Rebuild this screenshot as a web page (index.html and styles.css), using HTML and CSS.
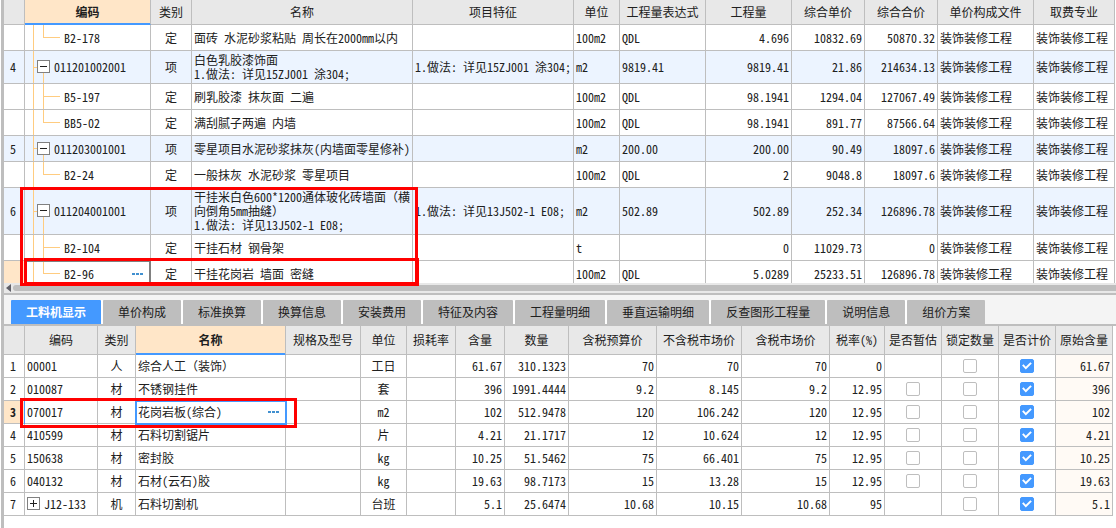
FILE: index.html
```html
<!DOCTYPE html>
<html lang="zh-CN">
<head>
<meta charset="utf-8">
<title>分部分项</title>
<link rel="stylesheet" href="styles.css">
</head>
<body>
<main class="app">
<section class="upper">
<div class="viewport">
<table class="grid bills">
<colgroup><col class="w21"><col class="w126"><col class="w41"><col><col class="w161"><col class="w46"><col class="w86"><col class="w86"><col class="w73"><col class="w73"><col class="w96"><col class="w81"></colgroup>
<thead>
<tr><th></th><th class="current">编码</th><th>类别</th><th>名称</th><th>项目特征</th><th>单位</th><th>工程量表达式</th><th>工程量</th><th>综合单价</th><th>综合合价</th><th>单价构成文件</th><th>取费专业</th></tr>
</thead>
<tbody>
<tr><td class="no"></td><td class="leaf last">B2-178</td><td class="mid">定</td><td>面砖 水泥砂浆粘贴 周长在2000mm以内</td><td></td><td>100m2</td><td>QDL</td><td class="num">4.696</td><td class="num">10832.69</td><td class="num">50870.32</td><td>装饰装修工程</td><td>装饰装修工程</td></tr>
<tr class="item two"><td class="no">4</td><td class="branch"><button class="fold" aria-label="折叠"><svg viewBox="0 0 13 13"><path d="M3 6.5h7"/></svg></button>011201002001</td><td class="mid">项</td><td>白色乳胶漆饰面<br>1.做法: 详见15ZJ001 涂304;</td><td>1.做法: 详见15ZJ001 涂304;</td><td>m2</td><td>9819.41</td><td class="num">9819.41</td><td class="num">21.86</td><td class="num">214634.13</td><td>装饰装修工程</td><td>装饰装修工程</td></tr>
<tr><td class="no"></td><td class="leaf">B5-197</td><td class="mid">定</td><td>刷乳胶漆 抹灰面 二遍</td><td></td><td>100m2</td><td>QDL</td><td class="num">98.1941</td><td class="num">1294.04</td><td class="num">127067.49</td><td>装饰装修工程</td><td>装饰装修工程</td></tr>
<tr><td class="no"></td><td class="leaf last">BB5-02</td><td class="mid">定</td><td>满刮腻子两遍 内墙</td><td></td><td>100m2</td><td>QDL</td><td class="num">98.1941</td><td class="num">891.77</td><td class="num">87566.64</td><td>装饰装修工程</td><td>装饰装修工程</td></tr>
<tr class="item"><td class="no">5</td><td class="branch"><button class="fold" aria-label="折叠"><svg viewBox="0 0 13 13"><path d="M3 6.5h7"/></svg></button>011203001001</td><td class="mid">项</td><td>零星项目水泥砂浆抹灰(内墙面零星修补)</td><td></td><td>m2</td><td>200.00</td><td class="num">200.00</td><td class="num">90.49</td><td class="num">18097.6</td><td>装饰装修工程</td><td>装饰装修工程</td></tr>
<tr><td class="no"></td><td class="leaf last">B2-24</td><td class="mid">定</td><td>一般抹灰 水泥砂浆 零星项目</td><td></td><td>100m2</td><td>QDL</td><td class="num">2</td><td class="num">9048.8</td><td class="num">18097.6</td><td>装饰装修工程</td><td>装饰装修工程</td></tr>
<tr class="item three"><td class="no">6</td><td class="branch"><button class="fold" aria-label="折叠"><svg viewBox="0 0 13 13"><path d="M3 6.5h7"/></svg></button>011204001001</td><td class="mid">项</td><td>干挂米白色600*1200通体玻化砖墙面（横<br>向倒角5mm抽缝）<br>1.做法: 详见13J502-1 E08;</td><td>1.做法: 详见13J502-1 E08;</td><td>m2</td><td>502.89</td><td class="num">502.89</td><td class="num">252.34</td><td class="num">126896.78</td><td>装饰装修工程</td><td>装饰装修工程</td></tr>
<tr><td class="no"></td><td class="leaf">B2-104</td><td class="mid">定</td><td>干挂石材 钢骨架</td><td></td><td>t</td><td></td><td class="num">0</td><td class="num">11029.73</td><td class="num">0</td><td>装饰装修工程</td><td>装饰装修工程</td></tr>
<tr><td class="no current"></td><td class="leaf last focus"><div class="pick">B2-96<button class="more" aria-label="选择编码"><svg viewBox="0 0 11 2"><path d="M0 0h3v2H0zM4 0h3v2H4zM8 0h3v2H8z"/></svg></button></div></td><td class="mid">定</td><td>干挂花岗岩 墙面 密缝</td><td></td><td>100m2</td><td>QDL</td><td class="num">5.0289</td><td class="num">25233.51</td><td class="num">126896.78</td><td>装饰装修工程</td><td>装饰装修工程</td></tr>
</tbody>
</table>
</div>
<div class="scrollbar"><svg class="arrow" viewBox="0 0 5 8"><path d="M5 0v8L0 4z"/></svg><div class="thumb"></div></div>
<div class="mark mark-item"></div>
<div class="mark mark-row"></div>
</section>
<section class="lower">
<nav class="tabs" role="tablist">
<button class="tab active" role="tab" aria-selected="true">工料机显示</button><button class="tab" role="tab">单价构成</button><button class="tab" role="tab">标准换算</button><button class="tab" role="tab">换算信息</button><button class="tab" role="tab">安装费用</button><button class="tab" role="tab">特征及内容</button><button class="tab" role="tab">工程量明细</button><button class="tab" role="tab">垂直运输明细</button><button class="tab" role="tab">反查图形工程量</button><button class="tab" role="tab">说明信息</button><button class="tab" role="tab">组价方案</button>
</nav>
<div class="resources-wrap">
<table class="grid resources">
<colgroup><col class="w21"><col class="w73"><col class="w38"><col><col class="w75"><col class="w46"><col class="w49"><col class="w49"><col class="w64"><col class="w88"><col class="w85"><col class="w88"><col class="w55"><col class="w57"><col class="w57"><col class="w57"><col class="w57"></colgroup>
<thead>
<tr><th></th><th>编码</th><th>类别</th><th class="current">名称</th><th>规格及型号</th><th>单位</th><th>损耗率</th><th>含量</th><th>数量</th><th>含税预算价</th><th>不含税市场价</th><th>含税市场价</th><th>税率(%)</th><th>是否暂估</th><th>锁定数量</th><th>是否计价</th><th>原始含量</th></tr>
</thead>
<tbody>
<tr><td class="no">1</td><td>00001</td><td class="mid">人</td><td>综合人工（装饰）</td><td></td><td class="mid">工日</td><td></td><td class="num">61.67</td><td class="num">310.1323</td><td class="num">70</td><td class="num">70</td><td class="num">70</td><td class="num">0</td><td></td><td class="mid"><input type="checkbox" aria-label="锁定数量"></td><td class="mid"><input type="checkbox" aria-label="是否计价" checked></td><td class="num origin">61.67</td></tr>
<tr><td class="no">2</td><td>010087</td><td class="mid">材</td><td>不锈钢挂件</td><td></td><td class="mid">套</td><td></td><td class="num">396</td><td class="num">1991.4444</td><td class="num">9.2</td><td class="num">8.145</td><td class="num">9.2</td><td class="num">12.95</td><td class="mid"><input type="checkbox" aria-label="是否暂估"></td><td class="mid"><input type="checkbox" aria-label="锁定数量"></td><td class="mid"><input type="checkbox" aria-label="是否计价" checked></td><td class="num origin">396</td></tr>
<tr><td class="no current">3</td><td class="start">070017</td><td class="mid">材</td><td class="editing"><div class="pick">花岗岩板(综合)<button class="more" aria-label="选择材料"><svg viewBox="0 0 11 2"><path d="M0 0h3v2H0zM4 0h3v2H4zM8 0h3v2H8z"/></svg></button></div></td><td></td><td class="mid">m2</td><td></td><td class="num">102</td><td class="num">512.9478</td><td class="num">120</td><td class="num">106.242</td><td class="num">120</td><td class="num">12.95</td><td class="mid"><input type="checkbox" aria-label="是否暂估"></td><td class="mid"><input type="checkbox" aria-label="锁定数量"></td><td class="mid"><input type="checkbox" aria-label="是否计价" checked></td><td class="num origin">102</td></tr>
<tr><td class="no">4</td><td>410599</td><td class="mid">材</td><td>石料切割锯片</td><td></td><td class="mid">片</td><td></td><td class="num">4.21</td><td class="num">21.1717</td><td class="num">12</td><td class="num">10.624</td><td class="num">12</td><td class="num">12.95</td><td class="mid"><input type="checkbox" aria-label="是否暂估"></td><td class="mid"><input type="checkbox" aria-label="锁定数量"></td><td class="mid"><input type="checkbox" aria-label="是否计价" checked></td><td class="num origin">4.21</td></tr>
<tr><td class="no">5</td><td>150638</td><td class="mid">材</td><td>密封胶</td><td></td><td class="mid">kg</td><td></td><td class="num">10.25</td><td class="num">51.5462</td><td class="num">75</td><td class="num">66.401</td><td class="num">75</td><td class="num">12.95</td><td class="mid"><input type="checkbox" aria-label="是否暂估"></td><td class="mid"><input type="checkbox" aria-label="锁定数量"></td><td class="mid"><input type="checkbox" aria-label="是否计价" checked></td><td class="num origin">10.25</td></tr>
<tr><td class="no">6</td><td>040132</td><td class="mid">材</td><td>石材(云石)胶</td><td></td><td class="mid">kg</td><td></td><td class="num">19.63</td><td class="num">98.7173</td><td class="num">15</td><td class="num">13.28</td><td class="num">15</td><td class="num">12.95</td><td class="mid"><input type="checkbox" aria-label="是否暂估"></td><td class="mid"><input type="checkbox" aria-label="锁定数量"></td><td class="mid"><input type="checkbox" aria-label="是否计价" checked></td><td class="num origin">19.63</td></tr>
<tr><td class="no">7</td><td><button class="fold" aria-label="展开"><svg viewBox="0 0 13 13"><path d="M3 6.5h7M6.5 3v7"/></svg></button>J12-133</td><td class="mid">机</td><td>石料切割机</td><td></td><td class="mid">台班</td><td></td><td class="num">5.1</td><td class="num">25.6474</td><td class="num">10.68</td><td class="num">10.15</td><td class="num">10.68</td><td class="num">95</td><td></td><td class="mid"><input type="checkbox" aria-label="锁定数量"></td><td class="mid"><input type="checkbox" aria-label="是否计价" checked></td><td class="num origin">5.1</td></tr>
</tbody>
</table>
<div class="mark mark-resource"></div>
</div>
</section>
</main>
</body>
</html>
```
FILE: styles.css
```css
:root {
  --line: #bebebe;
  --blue: #4499ff;
  --head: #e8e8e8;
  --peach: #ffe6c8;
  --tree: #ffcc80;
  --text: #202020;
}

* { box-sizing: border-box; }

body {
  margin: 0;
  background: #fff;
  color: var(--text);
  font: 12px/14px "Noto Sans Mono CJK SC", "Noto Sans CJK SC", sans-serif;
}

button { font: inherit; color: inherit; border: 0; padding: 0; background: none; }

.app {
  display: flex;
  flex-direction: column;
  height: 100vh;
  margin-left: 1px;
  border-left: 3px solid var(--line);
}

.upper {
  position: relative;
  display: flex;
  flex-direction: column;
  flex: 1 1 0;
  min-height: 0;
}

.viewport { flex: 1 1 0; min-height: 0; padding-right: 1px; overflow: hidden; }

/* Grids */
.grid { width: 100%; table-layout: fixed; border-spacing: 0; }
.grid th, .grid td {
  padding: 0 2px;
  border-right: 1px solid var(--line);
  border-bottom: 1px solid var(--line);
  white-space: nowrap;
  overflow: hidden;
  vertical-align: middle;
  text-align: left;
}
.grid th { padding: 0; background: var(--head); font-weight: 400; text-align: center; }
.grid th.current {
  background: var(--peach);
  font-weight: 700;
  border-bottom: 1px solid var(--blue);
  box-shadow: inset 0 -1px var(--blue);
}
.grid .mid { text-align: center; }
.grid .num { text-align: right; }
.grid .no { padding: 0 2px 0 0; text-align: center; }
.grid .no.current { background: var(--peach); font-weight: 700; }
.grid .origin { background: #fffaf5; }

.bills tr { height: 26px; }
.bills thead tr { height: 25px; }
.bills .two { height: 33px; }
.bills .three { height: 47px; }
.item td { background-color: #ecf4ff; }

.resources tr { height: 23px; }
.resources thead tr { height: 29px; }

.w21 { width: 21px; }
.w38 { width: 38px; }
.w41 { width: 41px; }
.w46 { width: 46px; }
.w49 { width: 49px; }
.w55 { width: 55px; }
.w57 { width: 57px; }
.w64 { width: 64px; }
.w73 { width: 73px; }
.w75 { width: 75px; }
.w81 { width: 81px; }
.w85 { width: 85px; }
.w86 { width: 86px; }
.w88 { width: 88px; }
.w96 { width: 96px; }
.w126 { width: 126px; }
.w161 { width: 161px; }

/* Tree connectors: trunk, child stem, horizontal arm */
.grid .branch, .grid .leaf {
  background-image: linear-gradient(var(--tree), var(--tree)), linear-gradient(var(--tree), var(--tree)), linear-gradient(var(--tree), var(--tree));
  background-repeat: no-repeat;
}
.grid .branch {
  padding-left: 12px;
  background-size: 1px 100%, 1px 50%, 4px 1px;
  background-position: 8px 0, 18px 100%, 8px 50%;
}
.grid .leaf {
  padding-left: 39px;
  background-size: 1px 100%, 1px 100%, 17px 1px;
  background-position: 8px 0, 18px 0, 18px 50%;
}
.grid .leaf.last { background-size: 1px 100%, 1px 50%, 17px 1px; }
.grid .focus {
  border-right: 2px solid #808080;
  box-shadow: inset 0 1px #808080, -1px 0 var(--blue);
}

.fold {
  display: inline-block;
  width: 13px;
  height: 13px;
  margin-right: 4px;
  border: 1px solid #808080;
  background: #fff;
  vertical-align: top;
}
.fold svg { display: block; width: 13px; height: 13px; margin: -1px; fill: none; stroke: var(--text); }

.pick { display: flex; align-items: center; justify-content: space-between; }
.more { padding: 4px; }
.more svg { display: block; width: 11px; height: 2px; fill: #4090d0; }
.start { box-shadow: -1px 0 var(--blue); }
.grid .editing { outline: 2px solid var(--blue); outline-offset: -1px; }

input[type="checkbox"] {
  appearance: none;
  display: block;
  width: 14px;
  height: 14px;
  margin: 0 auto;
  border: 1px solid var(--line);
  border-radius: 2px;
  background: #fff;
}
input[type="checkbox"]:checked { border-color: var(--blue); background: var(--blue); }
input[type="checkbox"]:checked::before {
  content: "";
  display: block;
  width: 12px;
  height: 12px;
  background: #fff;
  clip-path: polygon(9% 46%, 21% 36%, 40% 56%, 78% 18%, 90% 30%, 40% 80%);
}

/* Scrollbar */
.scrollbar { display: flex; align-items: center; gap: 2px; height: 10px; padding-left: 2px; background: #e8e8e8; }
.arrow { width: 5px; height: 8px; fill: #606068; }
.thumb { flex: 1; height: 6px; border-radius: 3px 0 0 3px; background: var(--line); }

/* Tabs */
.lower { border-top: 2px solid var(--line); padding-bottom: 12px; }
.tabs {
  display: flex;
  gap: 2px;
  padding: 5px 7px 0;
  background: #f4f4f4;
  border-bottom: 2px solid var(--line);
}
.tab { height: 24px; padding: 0 15px; background: var(--line); box-shadow: 2px 0 #fff; white-space: nowrap; border-radius: 1px 1px 0 0; }
.tab:last-child { box-shadow: none; }
.tab.active { background: var(--blue); color: #fff; font-weight: 700; }
.resources-wrap { position: relative; padding-right: 3px; }

/* Red callouts over the grids */
.mark { position: absolute; border: 3px solid #ff0000; pointer-events: none; }
.mark-item { left: 16px; top: 187px; width: 398px; height: 99px; }
.mark-row { left: 20px; top: 258px; width: 395px; height: 28px; border-right-width: 4px; border-bottom-width: 4px; }
.mark-resource { left: 16px; top: 72px; width: 277px; height: 30px; }
```
